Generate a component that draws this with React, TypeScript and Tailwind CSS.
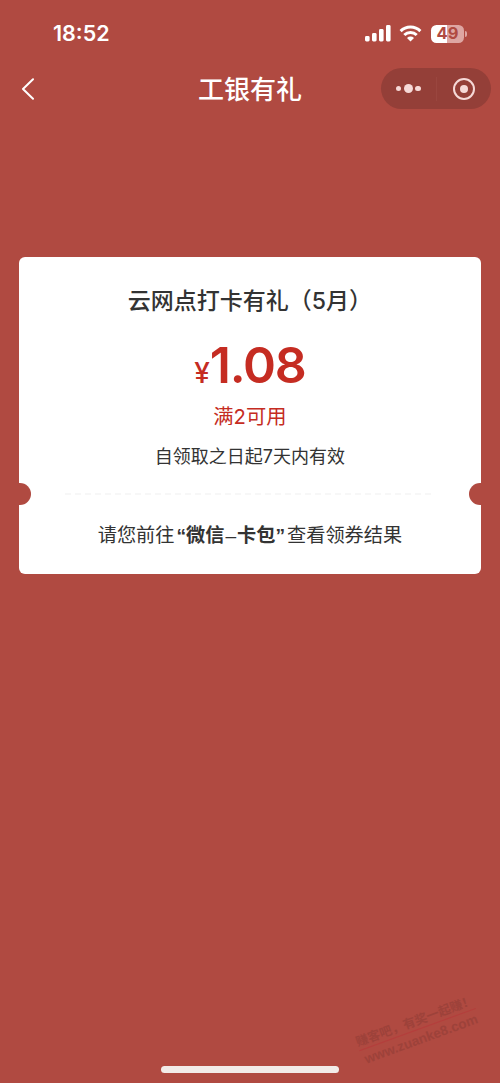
// Coupon result page of the mini program
const FONT = "font-['Inter','Noto_Sans_CJK_SC',sans-serif]";

function StatusBar() {
  return (
    <div className="flex h-[67px] items-center justify-between pr-[33px] pl-[53px]">
      <span className="text-[21.5px] font-semibold">18:52</span>
      <div className="flex items-center">
        {/* Signal */}
        <svg width="26" height="17" viewBox="0 0 26 17" fill="currentColor">
          <rect x="0" y="11" width="4.6" height="5.5" rx="1.4" />
          <rect x="7" y="8" width="4.6" height="8.5" rx="1.4" />
          <rect x="14" y="4" width="4.6" height="12.5" rx="1.4" />
          <rect x="21" y="0" width="4.6" height="16.5" rx="1.4" />
        </svg>
        {/* Wi-Fi */}
        <svg
          className="ml-2"
          width="23"
          height="17"
          viewBox="0 0 23 17"
          fill="none"
          stroke="currentColor"
          strokeWidth="3"
        >
          <path d="M1.6 6.1a14 14 0 0 1 19.8 0" />
          <path d="M5.3 10a8.8 8.8 0 0 1 12.4 0" />
          <path
            d="M11.5 16.5 8 13a5 5 0 0 1 7 0z"
            fill="currentColor"
            stroke="none"
          />
        </svg>
        {/* Battery */}
        <div className="ml-[9px] flex h-[18px] w-[33px] items-center justify-center rounded-[5.5px] bg-linear-to-r from-white from-49% to-[#dea6a2] to-49% text-[16.5px] font-bold text-[#b04a41]">
          49
        </div>
        <div className="ml-px h-1.5 w-[2px] rounded-r-full bg-[#dea6a2]" />
      </div>
    </div>
  );
}

function NavBar() {
  return (
    <div className="grid h-[43px] grid-cols-[1fr_auto_1fr] items-center px-[9px]">
      <svg
        className="ml-3"
        width="14"
        height="22"
        viewBox="0 0 14 22"
        fill="none"
        stroke="currentColor"
        strokeWidth="2"
        strokeLinecap="round"
        strokeLinejoin="round"
      >
        <path d="M12 1.3 2 11l10 9.7" />
      </svg>
      <h1 className="pt-0.5 text-[26px] leading-none font-medium">工银有礼</h1>
      <div className="flex h-[41px] w-[110px] items-center justify-self-end rounded-full bg-[#943f38] text-[#f6d9d7]">
        <div className="flex flex-1 items-center justify-center gap-[2.5px]">
          <span className="size-[5.5px] rounded-full bg-current" />
          <span className="size-[9px] rounded-full bg-current" />
          <span className="size-[5.5px] rounded-full bg-current" />
        </div>
        <div className="h-6 w-px bg-[#9a463f]" />
        <div className="flex flex-1 items-center justify-center">
          <div className="flex size-[22px] items-center justify-center rounded-full border-[2.5px] border-current">
            <span className="size-2 rounded-full bg-current" />
          </div>
        </div>
      </div>
    </div>
  );
}

function Coupon() {
  return (
    <section className="relative mr-[19.5px] ml-[19.4px] mt-[147px] h-[316.5px] overflow-hidden rounded-[6px] bg-white text-center text-[#333]">
      <h2 className="mt-[32px] text-[23px] leading-6 font-medium">
        云网点打卡有礼（5月）
      </h2>
      <div className="mt-[27px] flex items-baseline justify-center leading-[50px] text-[#c52c22]">
        <span className="text-[28px] font-medium">¥</span>
        <span className="text-[50px] font-[560] tracking-[-1.2px]">1.08</span>
      </div>
      <p className="mt-[7px] text-[20.3px] leading-6 text-[#c52c22]">满2可用</p>
      <p className="mt-4 text-[18px] leading-6">自领取之日起7天内有效</p>

      <svg className="mx-auto mt-6" width="370" height="2">
        <path d="M0 1h370" stroke="#f5f5f5" strokeWidth="1.5" strokeDasharray="6 4" />
      </svg>
      <span className="absolute top-[225.5px] -left-[10.5px] size-[22px] rounded-full bg-[#b04a41]" />
      <span className="absolute top-[225.5px] -right-[10.5px] size-[22px] rounded-full bg-[#b04a41]" />

      <p className="mt-7 text-[19.2px] leading-6">
        请您前往
        <b className="font-['Liberation_Sans','Noto_Sans_CJK_SC',sans-serif] font-bold">
          <span className="pl-0.5">“</span>微信
          <span className="px-px font-normal">–</span>卡包
          <span className="pr-0.5">”</span>
        </b>
        查看领券结果
      </p>
    </section>
  );
}

function Watermark() {
  return (
    <div className="absolute top-[1013px] left-[356px] w-[124px] -rotate-[20deg] text-center text-[#963f38] opacity-70">
      <p className="border-b border-[#b8393a] text-[12.5px] leading-4 font-bold whitespace-nowrap">
        赚客吧，有奖一起赚！
      </p>
      <p className="mt-0.5 font-['Liberation_Sans',sans-serif] text-[13.5px] leading-4 font-bold">
        www.zuanke8.com
      </p>
    </div>
  );
}

export default function App() {
  return (
    <main
      className={`relative h-[1083px] w-[500px] overflow-hidden bg-[#b04a41] text-white ${FONT}`}
      lang="zh-CN"
    >
      <StatusBar />
      <NavBar />
      <Coupon />
      <Watermark />
      {/* Home indicator */}
      <div className="absolute bottom-[10px] left-[161px] h-[7px] w-[178px] rounded-full bg-[#f2ebe8]" />
    </main>
  );
}
